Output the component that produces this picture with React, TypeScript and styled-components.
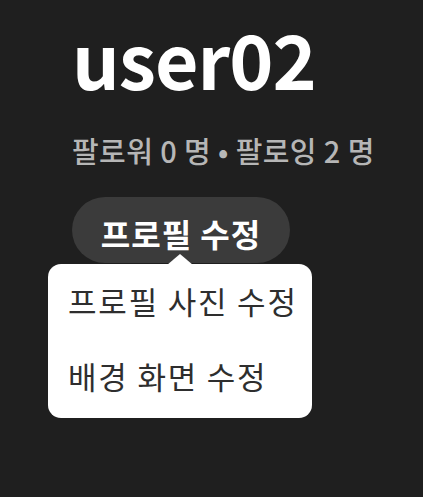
import React from "react";
import styled, { createGlobalStyle } from "styled-components";

const Global = createGlobalStyle`
  html, body { margin: 0; padding: 0; background: #1f1f1f; }
  body { font-family: "Noto Sans CJK KR", "Noto Sans", sans-serif; }
`;

const Page = styled.div`
  width: 423px;
  height: 497px;
  background: #1f1f1f;
  box-sizing: border-box;
  padding: 17px 0 0 72px;
  display: flex;
  flex-direction: column;
  align-items: flex-start;
`;

const Name = styled.h1`
  margin: 0;
  font-size: 75px;
  line-height: 82px;
  font-weight: 700;
  color: #ffffff;
  letter-spacing: -1px;
`;

const Stats = styled.div`
  margin-top: 33px;
  font-size: 29px;
  line-height: 36px;
  font-weight: 500;
  color: #b6b6b6;
  letter-spacing: 0.4px;
`;

const EditWrap = styled.div`
  position: relative;
  margin-top: 29px;
`;

const EditButton = styled.button`
  width: 218px;
  height: 66px;
  border: none;
  border-radius: 33px;
  background: #3b3b3b;
  color: #ffffff;
  font-family: inherit;
  font-size: 32px;
  font-weight: 700;
  letter-spacing: 1px;
  padding: 6px 0 0 0;
  display: flex;
  align-items: center;
  justify-content: center;
  box-sizing: border-box;
`;

const Menu = styled.div`
  position: absolute;
  left: -24px;
  top: 67px;
  width: 264px;
  height: 154px;
  background: #ffffff;
  border-radius: 13px;
  box-sizing: border-box;
  padding: 17px 0 0 20px;
  display: flex;
  flex-direction: column;
  gap: 35px;

  &::before {
    content: "";
    position: absolute;
    left: 119px;
    top: -10px;
    width: 0;
    height: 0;
    border-left: 13px solid transparent;
    border-right: 13px solid transparent;
    border-bottom: 11px solid #ffffff;
  }
`;

const MenuItem = styled.div`
  font-size: 31px;
  line-height: 40px;
  font-weight: 400;
  color: #2e2e2e;
  letter-spacing: 1.8px;
`;

export default function App() {
  return (
    <>
      <Global />
      <Page>
        <Name>user02</Name>
        <Stats>팔로워 0 명 • 팔로잉 2 명</Stats>
        <EditWrap>
          <EditButton>프로필 수정</EditButton>
          <Menu>
            <MenuItem>프로필 사진 수정</MenuItem>
            <MenuItem>배경 화면 수정</MenuItem>
          </Menu>
        </EditWrap>
      </Page>
    </>
  );
}
